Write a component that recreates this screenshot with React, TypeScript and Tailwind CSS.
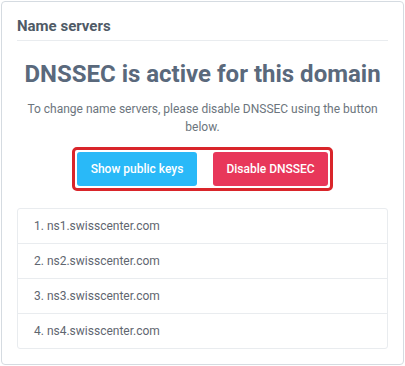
import React from 'react';

const servers = ['ns1.swisscenter.com', 'ns2.swisscenter.com', 'ns3.swisscenter.com', 'ns4.swisscenter.com'];

export default function App() {
  return (
    <div className="w-[405px] h-[366px] bg-white p-px" style={{ fontFamily: 'Roboto, "Liberation Sans", sans-serif' }}>
      <div className="h-[364px] w-[403px] border border-[#d5dbe1] rounded-[4px] bg-white px-[15px] pt-[13px]">
        <div className="border-b border-[#e9ecef] pb-[3px]">
          <h3 className="text-[15px] leading-[22px] font-bold text-[#4f5a66]">Name servers</h3>
        </div>

        <div className="flex flex-col items-center text-center">
          <h1 className="mt-[18px] text-[24px] leading-[30px] font-bold text-[#5a697c]">
            DNSSEC is active for this domain
          </h1>
          <p className="mt-[11px] text-[12px] leading-[18px] text-[#6c757d]">
            To change name servers, please disable DNSSEC using the button below.
          </p>
          <div className="mt-[11px] flex gap-[16px] border-[3px] border-[#d9252a] rounded-[5px] p-[2px]">
            <button className="w-[120px] h-[34px] rounded-[3px] bg-[#29b9f8] text-white text-[12px] font-medium">
              Show public keys
            </button>
            <button className="w-[115px] h-[34px] rounded-[3px] bg-[#e8375a] text-white text-[12px] font-medium">
              Disable DNSSEC
            </button>
          </div>
        </div>

        <ul className="mt-[17px] border border-[#e9ecef] rounded-[3px]">
          {servers.map((s, i) => (
            <li
              key={s}
              className={`flex items-center pl-[16px] text-[12px] text-[#5f6670] ${i > 0 ? 'h-[35px] border-t border-[#e9ecef]' : 'h-[34px]'}`}
            >
              {i + 1}. {s}
            </li>
          ))}
        </ul>
      </div>
    </div>
  );
}
